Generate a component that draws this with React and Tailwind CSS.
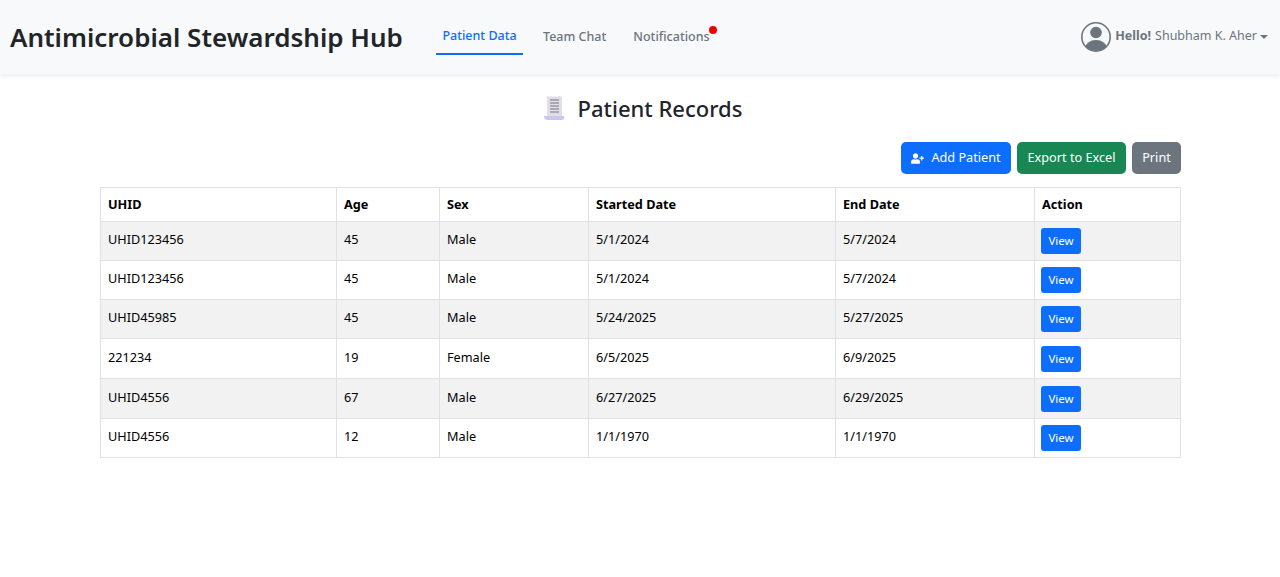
import { FaUserPlus } from "react-icons/fa";

const patients = [
  { uhid: "UHID123456", age: 45, sex: "Male", start: "5/1/2024", end: "5/7/2024", h: "h-[39px]" },
  { uhid: "UHID123456", age: 45, sex: "Male", start: "5/1/2024", end: "5/7/2024", h: "h-[39px]" },
  { uhid: "UHID45985", age: 45, sex: "Male", start: "5/24/2025", end: "5/27/2025", h: "h-[39px]" },
  { uhid: "221234", age: 19, sex: "Female", start: "6/5/2025", end: "6/9/2025", h: "h-[40px]" },
  { uhid: "UHID4556", age: 67, sex: "Male", start: "6/27/2025", end: "6/29/2025", h: "h-[40px]" },
  { uhid: "UHID4556", age: 12, sex: "Male", start: "1/1/1970", end: "1/1/1970", h: "h-[39px]" },
];

function Avatar() {
  return (
    <svg width="32" height="32" viewBox="0 0 32 32">
      <defs>
        <clipPath id="ring">
          <circle cx="16" cy="16" r="14" />
        </clipPath>
      </defs>
      <circle cx="16" cy="16" r="14.2" fill="none" stroke="#6c757d" strokeWidth="1.6" />
      <circle cx="16" cy="11.5" r="5.8" fill="#6c757d" />
      <ellipse cx="16" cy="27.5" rx="11" ry="8.5" fill="#6c757d" clipPath="url(#ring)" />
    </svg>
  );
}

function ReceiptIcon() {
  return (
    <svg width="24" height="26" viewBox="0 0 24 26">
      <path d="M5 1 L7 2 L9 1 L11 2 L13 1 L15 2 L17 1 L20 2 L20 21 L5 21 Z" fill="#e0dee6" />
      <path d="M8 5h9M8 8h9M8 11h9M8 14h9M8 17h9" stroke="#9a98a2" strokeWidth="1.3" />
      <path d="M2 21 Q2 25 6 25 L20 25 Q23 24 22 21 Z" fill="#cfc4ee" />
    </svg>
  );
}

export default function App() {
  return (
    <div className="min-h-[577px] bg-white text-[#212529] font-['Noto_Sans','Open_Sans',sans-serif]">
      <nav className="flex h-[74px] items-center justify-between bg-[#f8f9fa] pl-[10px] pr-[12px] shadow-[0_2px_4px_rgba(0,0,0,0.08)]">
        <div className="flex items-center">
          <h1 className="w-[426px] text-[26px] font-semibold leading-none">Antimicrobial Stewardship Hub</h1>
          <a className="flex h-[36px] w-[87px] items-center justify-center border-b-2 border-[#0d6efd] pt-[1px] text-[12.5px] font-medium text-[#0d6efd]">Patient Data</a>
          <a className="ml-[20px] text-[12.5px] font-medium text-[#6c757d]">Team Chat</a>
          <a className="relative ml-[27px] text-[12.5px] font-medium text-[#6c757d]">
            Notifications
            <span className="absolute -right-[7px] -top-[2px] h-2 w-2 rounded-full bg-[#f00000]"></span>
          </a>
        </div>
        <div className="flex items-center text-[12.5px] text-[#6c757d]">
          <Avatar />
          <span className="ml-[3px] -translate-y-px font-bold">Hello!</span>
          <span className="ml-1 -translate-y-px">Shubham K. Aher</span>
          <span className="ml-[3px] -mt-[1px] border-x-[4px] border-t-[4px] border-x-transparent border-t-[#6c757d]"></span>
        </div>
      </nav>

      <main className="ml-[100px] w-[1081px]">
        <div className="flex h-[68px] items-center justify-center pl-[3px]">
          <ReceiptIcon />
          <h2 className="ml-[12px] text-[22px] font-medium leading-none">Patient Records</h2>
        </div>

        <div className="flex justify-end gap-[6px]">
          <button className="flex h-[32px] w-[110px] items-center justify-center gap-[7px] rounded-[5px] bg-[#0d6efd] text-[12.7px] text-white">
            <FaUserPlus className="text-[13px]" />
            Add Patient
          </button>
          <button className="h-[32px] w-[109px] rounded-[5px] bg-[#198754] text-[12.7px] text-white">Export to Excel</button>
          <button className="h-[32px] w-[49px] rounded-[5px] bg-[#6c757d] text-[12.7px] text-white">Print</button>
        </div>

        <table className="mt-[13px] w-[1080px] table-fixed border-collapse text-[12.7px] text-black">
          <colgroup>
            <col className="w-[236px]" />
            <col className="w-[103px]" />
            <col className="w-[149px]" />
            <col className="w-[247px]" />
            <col className="w-[199px]" />
            <col className="w-[146px]" />
          </colgroup>
          <thead>
            <tr className="h-[34px] font-bold">
              {["UHID", "Age", "Sex", "Started Date", "End Date", "Action"].map((label) => (
                <th key={label} className="border border-[#dee2e6] px-[7px] text-left font-bold">{label}</th>
              ))}
            </tr>
          </thead>
          <tbody>
            {patients.map((p, i) => (
              <tr key={i} className={`${p.h} ${i % 2 === 0 ? "bg-[#f2f2f2]" : "bg-white"}`}>
                <td className="border border-[#dee2e6] px-[7px] pb-[2px]">{p.uhid}</td>
                <td className="border border-[#dee2e6] px-[7px] pb-[2px]">{p.age}</td>
                <td className="border border-[#dee2e6] px-[7px] pb-[2px]">{p.sex}</td>
                <td className="border border-[#dee2e6] px-[7px] pb-[2px]">{p.start}</td>
                <td className="border border-[#dee2e6] px-[7px] pb-[2px]">{p.end}</td>
                <td className="border border-[#dee2e6] px-[6px]">
                  <button className="block h-[26px] w-[40px] rounded-[3px] bg-[#0d6efd] text-[11.5px] text-white">View</button>
                </td>
              </tr>
            ))}
          </tbody>
        </table>
      </main>
    </div>
  );
}
